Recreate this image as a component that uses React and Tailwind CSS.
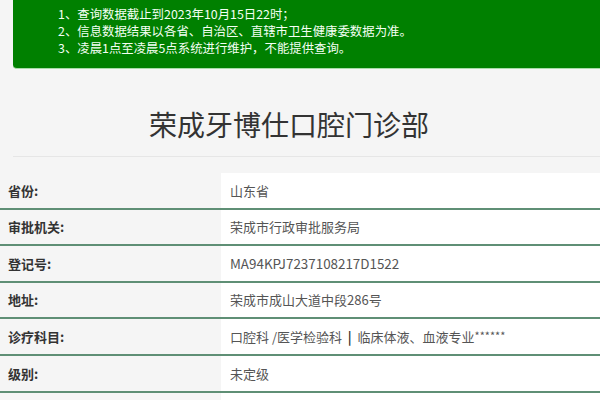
export default function App() {
  const rows = [
    ["省份:", "山东省"],
    ["审批机关:", "荣成市行政审批服务局"],
    ["登记号:", "MA94KPJ7237108217D1522"],
    ["地址:", "荣成市成山大道中段286号"],
    ["诊疗科目:", null],
    ["级别:", "未定级"],
    ["", ""],
  ];
  return (
    <div
      className="w-[600px] h-[400px] overflow-hidden bg-[#f5f5f5]"
      style={{ fontFamily: '"Microsoft YaHei", "Noto Sans CJK SC", sans-serif' }}
    >
      <div className="ml-[13px] bg-[#008000] rounded-bl-[4px] pt-[6px] pb-[11px] pl-[45px] text-[12.4px] leading-[17px] text-[#f4fff4] border-b border-[#a8dca8]">
        <div>1、查询数据截止到2023年10月15日22时；</div>
        <div>2、信息数据结果以各省、自治区、直辖市卫生健康委数据为准。</div>
        <div>3、凌晨1点至凌晨5点系统进行维护，不能提供查询。</div>
      </div>
      <div className="mt-[35px] ml-[13px] pl-[136px] text-[28px] leading-[40px] text-[#333]">
        荣成牙博仕口腔门诊部
      </div>
      <div className="ml-[13px] mt-[12px] h-px bg-[#e6e6e6]" />
      <div className="mt-[16px]">
        {rows.map(([k, v], i) => (
          <div key={i} className="flex h-[36.6px] border-b-2 border-[#5f8f75]">
            <div className="w-[221px] pl-[8px] flex items-center text-[13px] font-bold text-[#333]">{k}</div>
            <div className="flex-1 bg-white pl-[9px] flex items-center text-[13px] text-[#555] whitespace-pre">
              {i === 2 ? (
                <span className="text-[13.4px]">{v}</span>
              ) : i === 4 ? (
                <span>
                  口腔科 /医学检验科{"  "}
                  <span className="font-bold text-[#333]">|</span>
                  {"  "}临床体液、血液专业<span className="text-[11px] relative top-[-2px]">******</span>
                </span>
              ) : (
                v
              )}
            </div>
          </div>
        ))}
      </div>
    </div>
  );
}
